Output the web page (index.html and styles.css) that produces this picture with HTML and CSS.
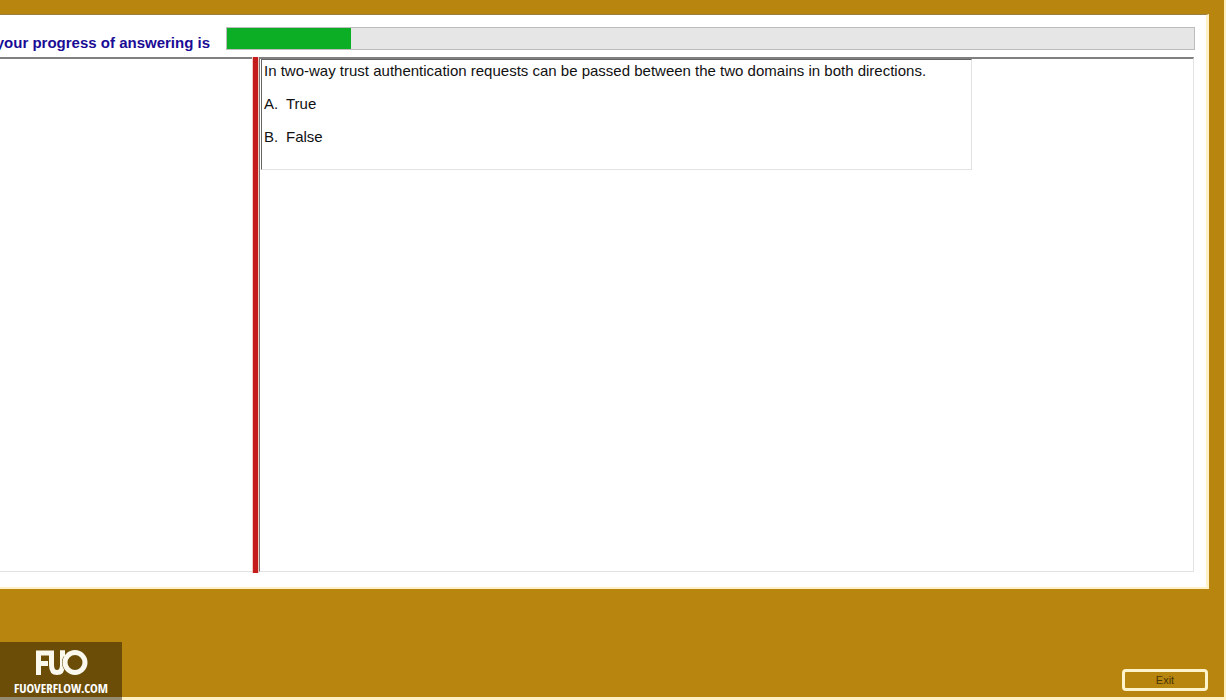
FILE: index.html
```
<!DOCTYPE html>
<html lang="en">
<head>
    <meta charset="utf-8">
    <title>Exam</title>
    <link rel="stylesheet" href="styles.css">
</head>
<body>
    <div class="window">
        <div class="panel">
            <div class="progress-row">
                <label class="progress-label" for="progress">your progress of answering is</label>
                <progress id="progress" class="progress" value="124" max="968"></progress>
            </div>
            <div class="split">
                <div class="answer-pane"></div>
                <div class="splitter"></div>
                <div class="question-pane">
                    <div class="question">
                        <p>In two-way trust authentication requests can be passed between the two domains in both directions.</p>
                        <p class="option"><span>A.</span><span>True</span></p>
                        <p class="option"><span>B.</span><span>False</span></p>
                    </div>
                </div>
            </div>
        </div>
        <div class="footer">
            <div class="logo">
                <svg class="logo-mark" width="54" height="28" viewBox="0 0 54 28" fill="none" stroke="#fbf8ee" stroke-width="5">
                    <path d="M4.500 26V4H15M4.500 14.500H14"/>
                    <path d="M17.500 1.500v14.500c0 5 2 7.500 5.500 7.500s5.500-2.500 5.500-7.500v-14.500"/>
                    <circle cx="41" cy="13.500" r="10" stroke="#6c5110" stroke-width="6"/>
                    <path d="M28.500 1.500v6"/>
                    <circle cx="41" cy="13.500" r="10"/>
                </svg>
                <span class="logo-text">FUOVERFLOW.COM</span>
            </div>
            <button type="button" class="exit">Exit</button>
        </div>
    </div>
</body>
</html>
```
FILE: styles.css
```
* {
    box-sizing: border-box;
}
body {
    margin: 0;
    background-color: #b8860f;
    font-family: "Liberation Sans", Arial, sans-serif;
    font-size: 15px;
    color: #111;
}
p {
    margin: 0;
}
.window {
    display: flex;
    flex-direction: column;
    min-height: 100vh;
    padding-top: 14px;
    border-right: 2px solid #fff0c4;
    border-bottom: 3px solid #fff0c4;
}
/* white work area */
.panel {
    display: flex;
    flex: 1;
    flex-direction: column;
    margin-right: 15px;
    padding: 12px 12px 15px 0;
    border-top: 1px solid #98803f;
    border-right: 3px solid #fff0c8;
    border-bottom: 2px solid #fff0c8;
    background-color: #fff;
}
.progress-row {
    display: flex;
    margin-bottom: 7px;
}
.progress-label {
    display: flex;
    flex: none;
    justify-content: flex-end;
    width: 226px;
    padding: 7px 16px 0 0;
    line-height: 18px;
    font-size: 15px;
    font-weight: bold;
    color: #1a0c96;
    white-space: nowrap;
}
.progress {
    flex: 1;
    height: 23px;
    margin-right: -1px;
    border: 1px solid #bcbcbc;
    background-color: #e6e6e6;
    appearance: none;
}
.progress::-webkit-progress-bar {
    background-color: #e6e6e6;
}
.progress::-webkit-progress-value {
    background-color: #0cae26;
}
.split {
    display: flex;
    flex: 1;
    margin-top: -2px;
}
.answer-pane {
    flex: none;
    width: 252px;
    border-top: 2px solid #808080;
    border-bottom: 1px solid #e2e2e2;
}
.splitter {
    flex: none;
    width: 7px;
    margin-bottom: -1px;
    border-right: 1px solid #f3c9c0;
    border-left: 1px solid #f3c9c0;
    background-color: #c41c1c;
}
.question-pane {
    flex: 1;
    padding-left: 1px;
    border: 1px solid #e2e2e2;
    border-top: 2px solid #808080;
    border-left: 1px solid #777;
}
.question {
    width: 711px;
    max-width: 100%;
    min-height: 111px;
    padding: 2px 2px 0;
    border: 1px solid #e2e2e2;
    border-top: 1px solid #666;
    border-left: 1px solid #666;
    line-height: 18px;
}
.option {
    display: flex;
    margin-top: 15px;
}
.option span:first-child {
    width: 22px;
}
/* bottom bar */
.footer {
    display: flex;
    align-items: flex-end;
    justify-content: space-between;
    height: 108px;
    padding-right: 16px;
}
.logo {
    display: flex;
    flex-direction: column;
    align-items: center;
    width: 122px;
    height: 58px;
    margin-bottom: -3px;
    padding-top: 7px;
    background-color: rgba(0, 0, 0, .42);
}
.logo-text {
    margin-top: 2px;
    line-height: 18px;
    font-family: "Open Sans Condensed", "DejaVu Sans Condensed", "Liberation Sans", sans-serif;
    font-size: 13px;
    font-weight: bold;
    color: #fff;
}
.exit {
    width: 86px;
    height: 22px;
    margin-bottom: 6px;
    padding: 0;
    border: 3px solid #fff3cc;
    border-radius: 4px;
    background-color: #b8860f;
    font-family: "Liberation Sans", Arial, sans-serif;
    font-size: 11px;
    color: #4a3505;
}
```
